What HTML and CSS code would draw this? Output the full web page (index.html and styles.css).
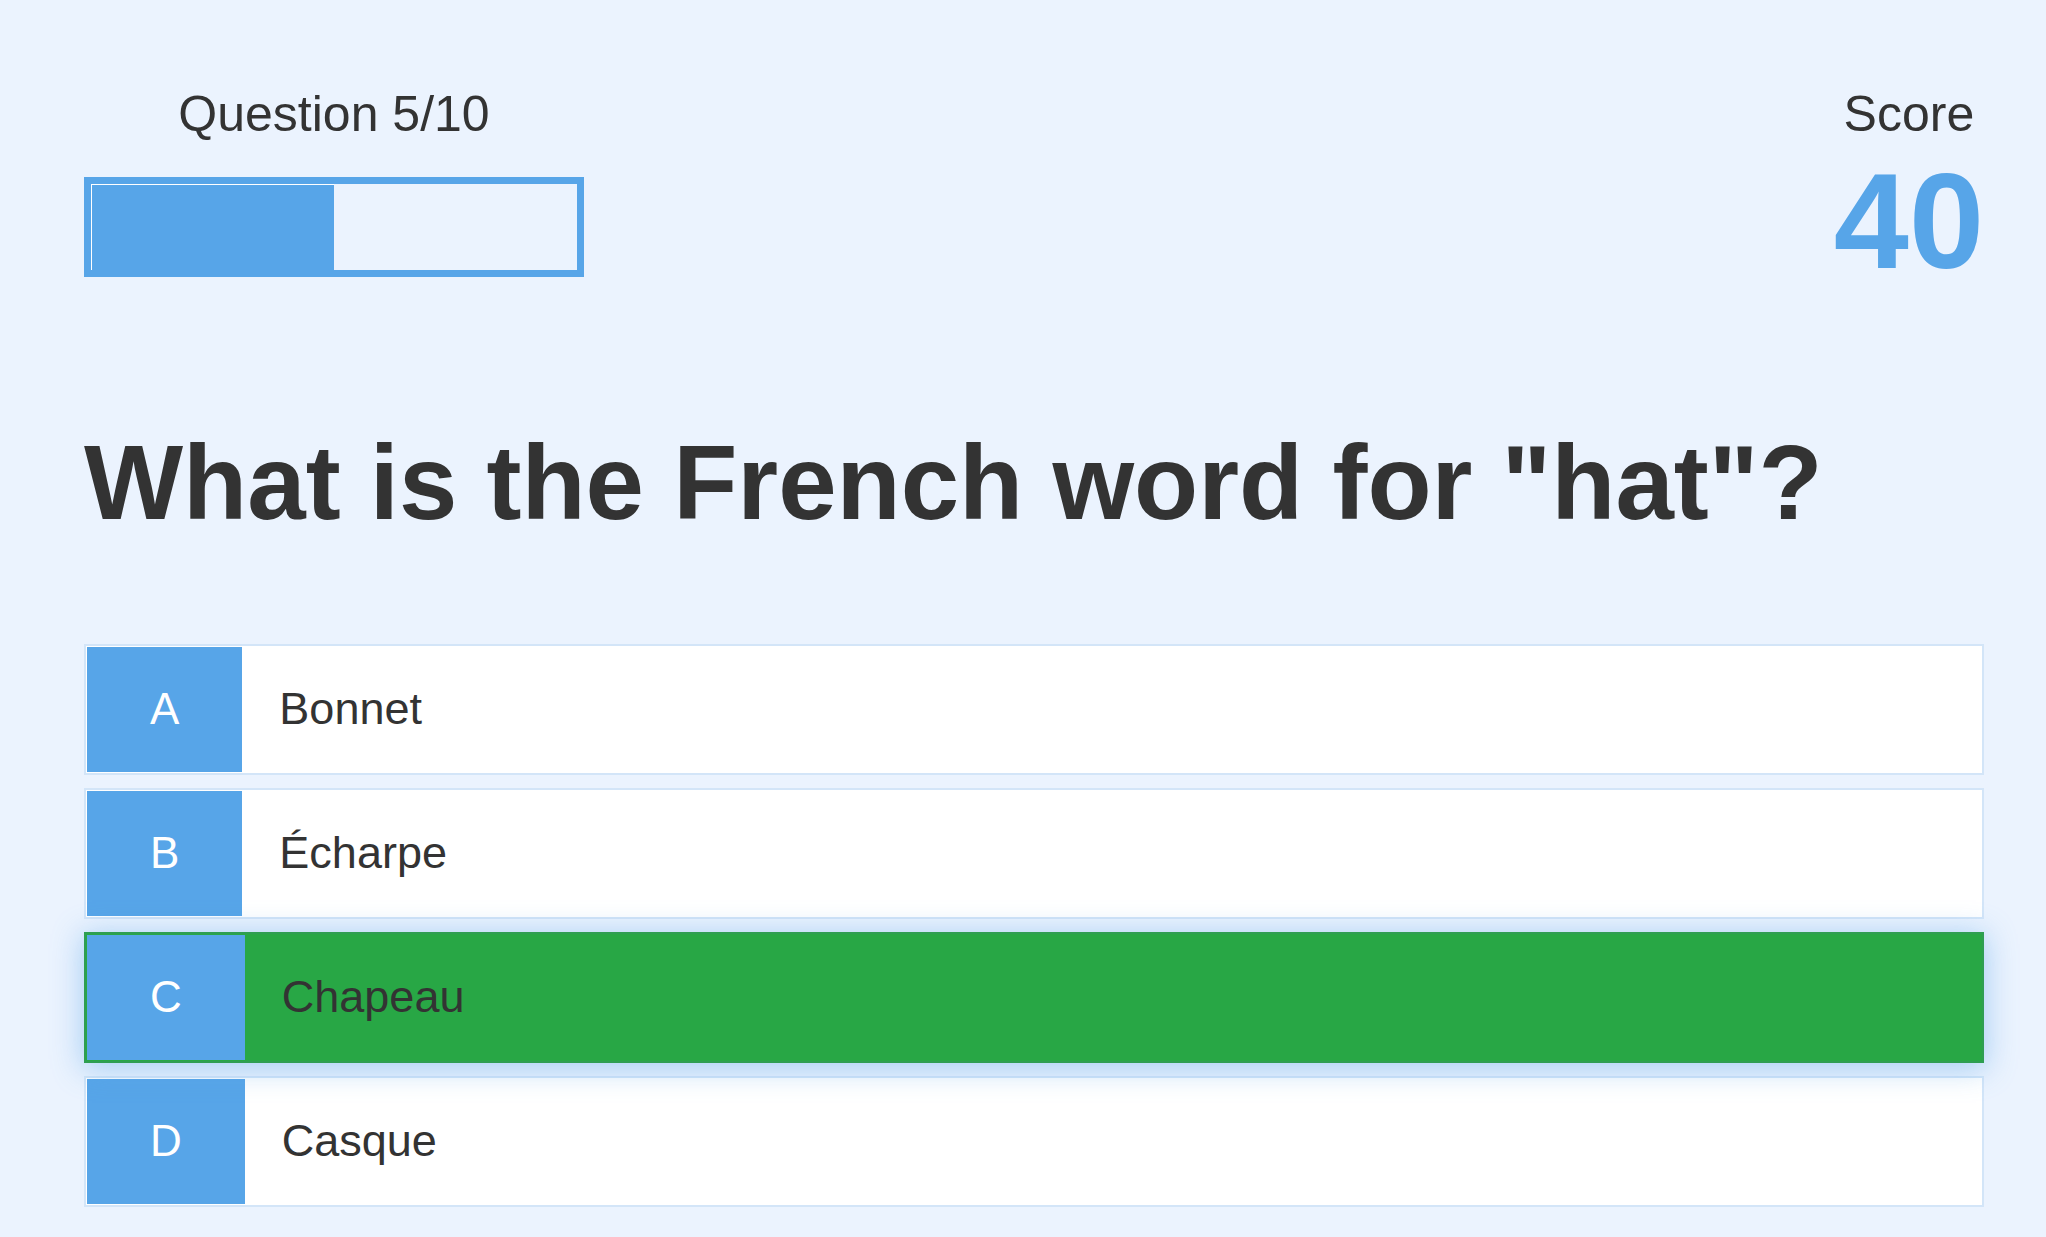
FILE: index.html
```html
<!DOCTYPE html>
<html lang="en">
<head>
<meta charset="utf-8">
<title>Quiz</title>
<link rel="stylesheet" href="styles.css">
</head>
<body>
<main class="quiz">
  <header class="quiz-header">
    <div class="progress-block">
      <div class="progress-label">Question 5/10</div>
      <div class="progress-bar"><div class="progress-fill" style="width:50%"></div></div>
    </div>
    <div class="score-block">
      <div class="score-label">Score</div>
      <div class="score-value">40</div>
    </div>
  </header>

  <h1 class="question">What is the French word for "hat"?</h1>

  <ul class="options">
    <li class="option"><span class="option-letter">A</span><span class="option-text">Bonnet</span></li>
    <li class="option"><span class="option-letter">B</span><span class="option-text">Écharpe</span></li>
    <li class="option option-correct"><span class="option-letter">C</span><span class="option-text">Chapeau</span></li>
    <li class="option"><span class="option-letter">D</span><span class="option-text">Casque</span></li>
  </ul>
</main>
</body>
</html>
```

FILE: styles.css
```css
html, body {
  margin: 0;
  padding: 0;
  background: #ebf3fe;
}

body {
  font-family: "Liberation Sans", Arial, sans-serif;
  color: #333333;
}

.quiz {
  padding: 86px 62px 0 84px;
}

.quiz-header {
  display: flex;
  justify-content: space-between;
  align-items: flex-start;
}

.progress-block {
  width: 500px;
  display: flex;
  flex-direction: column;
  align-items: center;
}

.progress-label,
.score-label {
  font-size: 50px;
  line-height: 57.5px;
  color: #333333;
}

.progress-bar {
  margin-top: 33px;
  width: 500px;
  height: 100px;
  box-sizing: border-box;
  border: 7px solid #57a5e8;
  display: flex;
}

.progress-fill {
  height: 100%;
  box-sizing: border-box;
  background: #57a5e8;
  border-top: 1px solid #ffffff;
  border-left: 1px solid #ffffff;
}

.score-block {
  text-align: center;
}

.score-value {
  margin-top: 10px;
  font-size: 135px;
  line-height: 135px;
  font-weight: bold;
  color: #57a5e8;
}

.question {
  margin: 131px 0 98px;
  font-size: 105px;
  line-height: 126px;
  font-weight: bold;
  color: #333333;
}

.options {
  list-style: none;
  margin: 0;
  padding: 0;
  display: flex;
  flex-direction: column;
  gap: 13px;
}

.option {
  display: flex;
  height: 131px;
  box-sizing: border-box;
  border: 2px solid #d3e5f8;
  padding: 1px;
  background: #ffffff;
}

.option-letter {
  display: flex;
  align-items: center;
  padding: 0 63px;
  background: #57a5e8;
  color: #ffffff;
  font-size: 44px;
}

.option-text {
  display: flex;
  align-items: center;
  padding-left: 37px;
  color: #333333;
  font-size: 45px;
}

.option-correct {
  position: relative;
  z-index: 1;
  background: #28a745;
  border-color: #2f9e52;
  box-shadow: 0 4px 28px 2px rgba(87, 165, 232, 0.45);
}
```
